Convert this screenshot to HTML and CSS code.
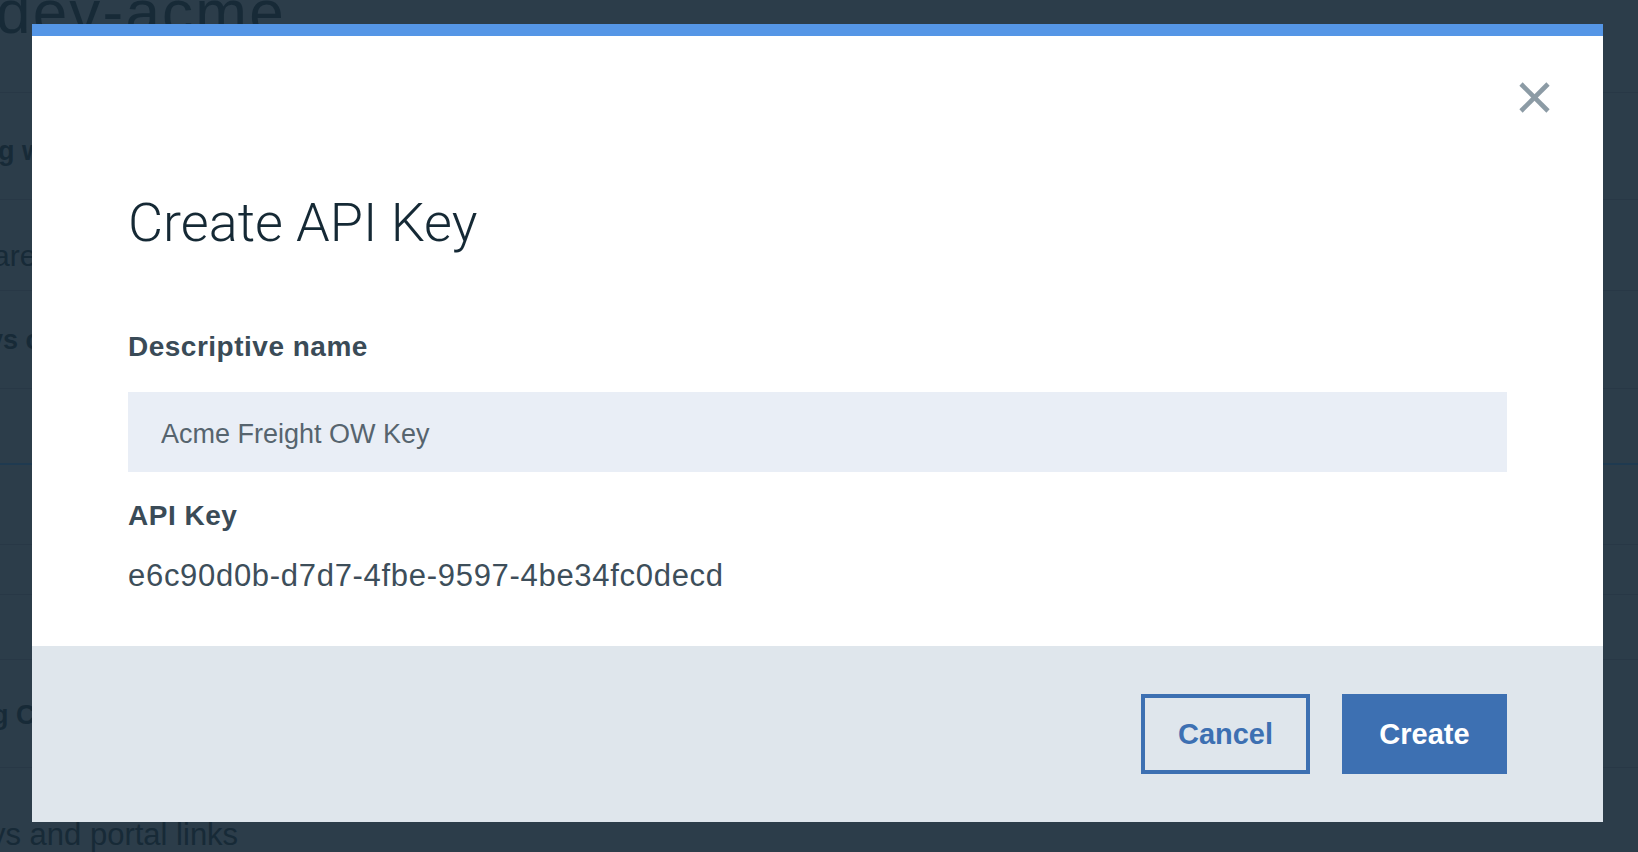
FILE: index.html
```html
<!DOCTYPE html>
<html lang="en">
<head>
<meta charset="utf-8">
<title>Create API Key</title>
<link rel="stylesheet" href="styles.css">
</head>
<body>
<div class="page">
  <div class="row row-0"><h1 class="page-title">dev-acme</h1></div>
  <div class="row row-1"><span class="bg-bold indent-a">g w</span></div>
  <div class="row row-2"><span class="bg-text indent-b">are</span></div>
  <div class="row row-3"><span class="bg-bold indent-c">ys c</span></div>
  <div class="row row-4 row-accent"></div>
  <div class="row row-5"></div>
  <div class="row row-6"></div>
  <div class="row row-7"></div>
  <div class="row row-8"><span class="bg-bold indent-d">g C</span></div>
  <div class="row row-9"><span class="bg-text bg-text-lg indent-e">ys and portal links</span></div>
</div>

<div class="overlay">
  <div class="modal" role="dialog" aria-labelledby="modal-title">
    <div class="modal-body">
      <div class="modal-top">
        <button class="close-btn" type="button" aria-label="Close">
          <svg width="31" height="31" viewBox="0 0 31 31" aria-hidden="true">
            <line x1="2" y1="2" x2="29" y2="29"/>
            <line x1="29" y1="2" x2="2" y2="29"/>
          </svg>
        </button>
      </div>
      <h2 class="modal-title" id="modal-title">Create API Key</h2>
      <label class="field-label" for="key-name">Descriptive name</label>
      <input class="text-input" id="key-name" type="text" value="Acme Freight OW Key">
      <div class="field-label field-label-2">API Key</div>
      <div class="key-value">e6c90d0b-d7d7-4fbe-9597-4be34fc0decd</div>
    </div>
    <div class="modal-footer">
      <button class="btn btn-secondary" type="button">Cancel</button>
      <button class="btn btn-primary" type="button">Create</button>
    </div>
  </div>
</div>
</body>
</html>
```

FILE: styles.css
```css
* { box-sizing: border-box; }

html, body {
  margin: 0;
  padding: 0;
  width: 1638px;
  height: 852px;
  overflow: hidden;
}

body {
  background: #2c3d4a;
  font-family: "Liberation Sans", Arial, sans-serif;
  color: #172a37;
}

/* ---------- background page (dimmed) ---------- */
.page {
  display: flex;
  flex-direction: column;
}

.row {
  border-bottom: 1px solid #283846;
  white-space: nowrap;
  overflow: hidden;
}

.row-0 { height: 93px; }
.row-1 { height: 107px; padding-top: 43px; }
.row-2 { height: 91px; padding-top: 39px; }
.row-3 { height: 98px; padding-top: 34px; }
.row-4 { height: 76px; }
.row-accent { border-bottom: 2px solid #1f3a50; }
.row-5 { height: 80px; }
.row-6 { height: 50px; }
.row-7 { height: 65px; }
.row-8 { height: 108px; padding-top: 40px; }
.row-9 { height: 90px; padding-top: 50px; border-bottom: 0; }

.page-title {
  margin: -18px 0 0 -4px;
  font-size: 62px;
  line-height: 60px;
  font-weight: 400;
  letter-spacing: 2.2px;
  color: #172a37;
}

.bg-bold {
  display: block;
  font-size: 27px;
  line-height: 30px;
  font-weight: 700;
  color: #172a37;
}

.bg-text {
  display: block;
  font-size: 30px;
  line-height: 34px;
  color: #172a37;
}

.bg-text-lg { font-size: 31px; }

.indent-a { margin-left: -2px; }
.indent-b { margin-left: -7px; }
.indent-c { margin-left: -12px; }
.indent-d { margin-left: -8px; }
.indent-e { margin-left: -10px; }

/* ---------- modal ---------- */
.overlay {
  position: fixed;
  inset: 0;
  padding: 24px 35px 30px 32px;
  display: flex;
}

.modal {
  flex: 1;
  display: flex;
  flex-direction: column;
  background: #ffffff;
  border-top: 12px solid #5596e6;
}

.modal-body {
  height: 610px;
  padding: 46px 53px 0 96px;
  display: flex;
  flex-direction: column;
}

.modal-top {
  display: flex;
  justify-content: flex-end;
  height: 31px;
}

.close-btn {
  width: 31px;
  height: 31px;
  padding: 0;
  border: 0;
  background: transparent;
  cursor: pointer;
  display: block;
}

.close-btn svg { display: block; }

.close-btn line {
  stroke: #8c9ba5;
  stroke-width: 4.6;
  stroke-linecap: butt;
}

.modal-title {
  margin: 78px 0 0;
  font-family: Roboto, "Liberation Sans", sans-serif;
  font-weight: 300;
  font-size: 54px;
  line-height: 63px;
  color: #152935;
}

.field-label {
  display: block;
  margin-top: 77px;
  font-size: 28px;
  line-height: 32px;
  font-weight: 700;
  letter-spacing: 0.5px;
  color: #3a4b57;
}

.field-label-2 { margin-top: 28px; }

.text-input {
  display: block;
  margin-top: 29px;
  width: 1379px;
  height: 80px;
  padding: 4px 33px 0;
  border: 0;
  outline: 0;
  background: #e9eef6;
  font-family: "Liberation Sans", Arial, sans-serif;
  font-size: 27px;
  color: #56646e;
}

.key-value {
  margin-top: 26px;
  font-size: 31px;
  line-height: 36px;
  letter-spacing: 0.7px;
  color: #3d4e5a;
}

.modal-footer {
  flex: 1;
  background: #dfe6ec;
  display: flex;
  justify-content: flex-end;
  align-items: flex-start;
  gap: 32px;
  padding: 48px 96px 0 0;
}

.btn {
  height: 80px;
  font-family: "Liberation Sans", Arial, sans-serif;
  font-size: 29px;
  font-weight: 700;
  cursor: pointer;
  padding: 0;
}

.btn-secondary {
  width: 169px;
  background: transparent;
  border: 4px solid #3d70b2;
  color: #3d70b2;
}

.btn-primary {
  width: 165px;
  background: #3d70b2;
  border: 0;
  color: #ffffff;
}
```
